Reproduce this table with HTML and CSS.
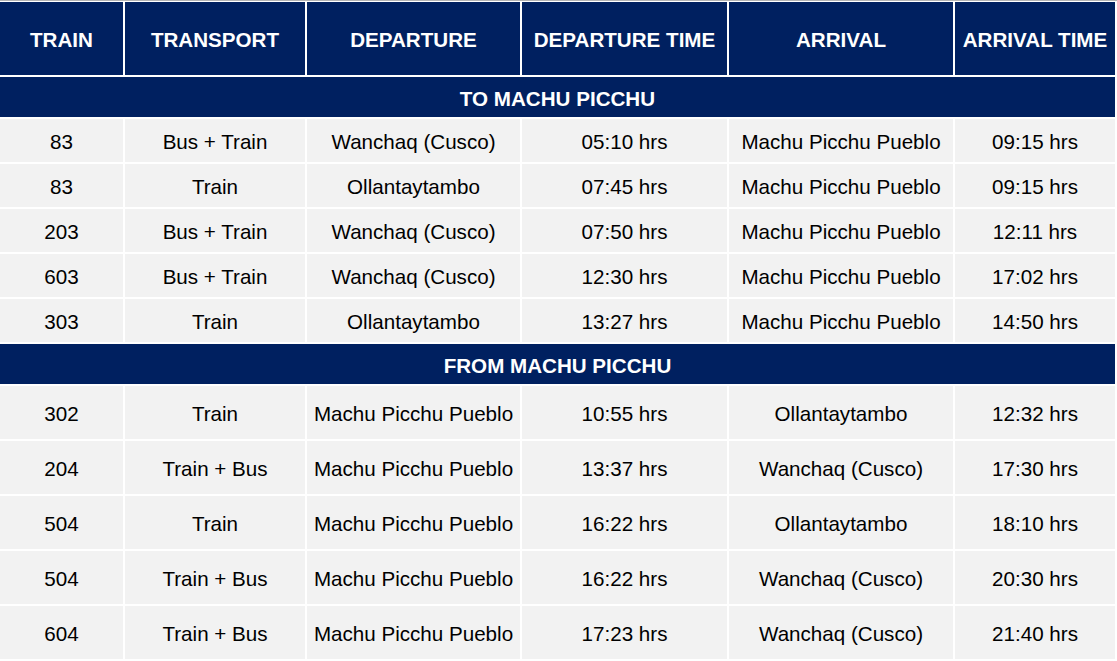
FILE: index.html
```html
<!DOCTYPE html>
<html lang="en">
<head>
<meta charset="utf-8">
<title>Train Schedule</title>
<link rel="stylesheet" href="styles.css">
</head>
<body>
<div class="wrap">
<table class="schedule">
  <colgroup>
    <col class="c1"><col class="c2"><col class="c3"><col class="c4"><col class="c5"><col class="c6">
  </colgroup>
  <thead>
    <tr class="head">
      <th>TRAIN</th><th>TRANSPORT</th><th>DEPARTURE</th><th>DEPARTURE TIME</th><th>ARRIVAL</th><th>ARRIVAL TIME</th>
    </tr>
  </thead>
  <tbody>
    <tr class="section"><th colspan="6">TO MACHU PICCHU</th></tr>
    <tr class="row-a"><td>83</td><td>Bus + Train</td><td>Wanchaq (Cusco)</td><td>05:10 hrs</td><td>Machu Picchu Pueblo</td><td>09:15 hrs</td></tr>
    <tr class="row-a"><td>83</td><td>Train</td><td>Ollantaytambo</td><td>07:45 hrs</td><td>Machu Picchu Pueblo</td><td>09:15 hrs</td></tr>
    <tr class="row-a"><td>203</td><td>Bus + Train</td><td>Wanchaq (Cusco)</td><td>07:50 hrs</td><td>Machu Picchu Pueblo</td><td>12:11 hrs</td></tr>
    <tr class="row-a"><td>603</td><td>Bus + Train</td><td>Wanchaq (Cusco)</td><td>12:30 hrs</td><td>Machu Picchu Pueblo</td><td>17:02 hrs</td></tr>
    <tr class="row-a"><td>303</td><td>Train</td><td>Ollantaytambo</td><td>13:27 hrs</td><td>Machu Picchu Pueblo</td><td>14:50 hrs</td></tr>
    <tr class="section"><th colspan="6">FROM MACHU PICCHU</th></tr>
    <tr class="row-b"><td>302</td><td>Train</td><td>Machu Picchu Pueblo</td><td>10:55 hrs</td><td>Ollantaytambo</td><td>12:32 hrs</td></tr>
    <tr class="row-b"><td>204</td><td>Train + Bus</td><td>Machu Picchu Pueblo</td><td>13:37 hrs</td><td>Wanchaq (Cusco)</td><td>17:30 hrs</td></tr>
    <tr class="row-b"><td>504</td><td>Train</td><td>Machu Picchu Pueblo</td><td>16:22 hrs</td><td>Ollantaytambo</td><td>18:10 hrs</td></tr>
    <tr class="row-b"><td>504</td><td>Train + Bus</td><td>Machu Picchu Pueblo</td><td>16:22 hrs</td><td>Wanchaq (Cusco)</td><td>20:30 hrs</td></tr>
    <tr class="row-b"><td>604</td><td>Train + Bus</td><td>Machu Picchu Pueblo</td><td>17:23 hrs</td><td>Wanchaq (Cusco)</td><td>21:40 hrs</td></tr>
  </tbody>
</table>
</div>
</body>
</html>
```
FILE: styles.css
```css
html, body {
  margin: 0;
  padding: 0;
  background: #ffffff;
  overflow: hidden;
}

.wrap {
  border-top: 1px solid #b4b4b4;
}

.schedule {
  border-collapse: separate;
  border-spacing: 2px;
  margin: -1px 0 0 -2px;
  width: 1119px;
  table-layout: fixed;
  font-family: "Liberation Sans", Arial, sans-serif;
  font-size: 20.6px;
}

.c1 { width: 123px; }
.c2 { width: 180px; }
.c3 { width: 213px; }
.c4 { width: 205px; }
.c5 { width: 224px; }
.c6 { width: 160px; }

.schedule th,
.schedule td {
  box-sizing: border-box;
  padding: 2px 0 0;
  text-align: center;
  vertical-align: middle;
  white-space: nowrap;
}

.head th {
  height: 73px;
  background: #002060;
  color: #ffffff;
  font-weight: bold;
}

.section th {
  height: 40px;
  padding-top: 4px;
  background: #002060;
  color: #ffffff;
  font-weight: bold;
}

.schedule td {
  background: #f2f2f2;
  color: #000000;
}

.row-a td { height: 43px; }
.row-b td { height: 53px; }
```
